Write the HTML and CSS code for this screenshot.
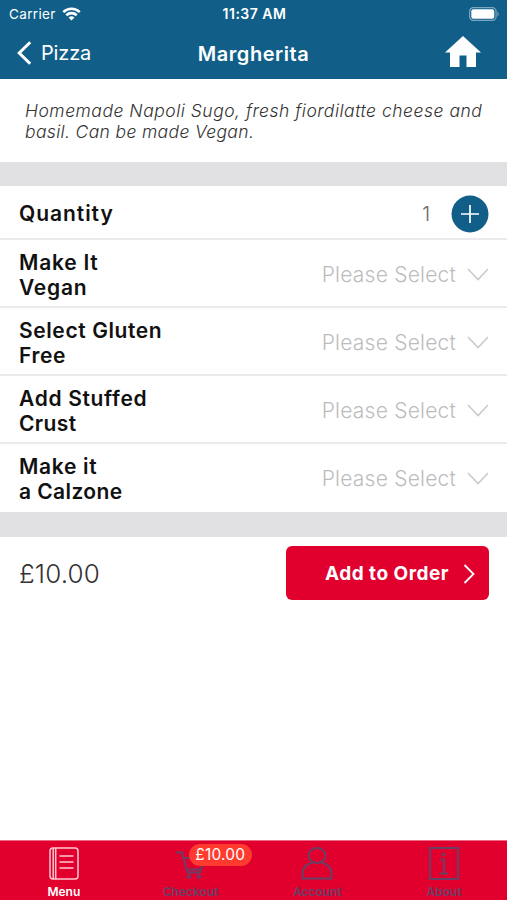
FILE: index.html
```html
<!DOCTYPE html>
<html lang="en">
<head>
<meta charset="utf-8">
<title>Margherita</title>
<link rel="stylesheet" href="styles.css">
</head>
<body>
<div class="app">
  <header class="top">
    <div class="status">
      <div class="carrier"><span>Carrier</span>
        <svg width="19" height="14" viewBox="0 0 19 14" fill="none" stroke="#fff" stroke-width="2.6"><path d="M1.3 5.1C6 .6 13 .6 17.700 5.100M4.300 8.200C7.200 5.400 11.800 5.400 14.700 8.200"/><path d="M9.500 13.500L6.600 10.500Q9.500 8 12.400 10.500Z" fill="#fff" stroke="none"/></svg>
      </div>
      <time>11:37 AM</time>
      <svg class="battery" width="31" height="14" viewBox="0 0 31 14"><rect x=".6" y=".6" width="26.500" height="12.800" rx="3.800" fill="none" stroke="#7ba8c0" stroke-width="1.200"/><rect x="2.300" y="2.300" width="23" height="9.400" rx="2" fill="#fff"/><path d="M28.500 4.500Q31 7 28.500 9.500Z" fill="#7ba8c0"/></svg>
    </div>
    <nav class="nav">
      <a class="back"><svg width="15" height="24" viewBox="0 0 15 24" fill="none" stroke="#fff" stroke-width="3"><path d="M13.200 1.200L2.200 12L13.200 22.800"/></svg><span>Pizza</span></a>
      <h1><span>Margherita</span></h1>
      <svg class="home" width="36" height="31" viewBox="0 0 36 31" fill="#fff"><path d="M18 0L36 16.500H31V31H21.500V19.500H14.500V31H5V16.500H0Z"/></svg>
    </nav>
  </header>
  <p class="description"><span class="d1">Homemade Napoli Sugo, fresh fiordilatte cheese and</span><br><span class="d2">basil. Can be made Vegan.</span></p>
  <section class="options">
    <div class="row quantity"><b class="l1">Quantity</b><div class="count"><span>1</span><svg width="38" height="38" viewBox="0 0 38 38"><circle cx="19" cy="19" r="18.500" fill="#115f89"/><path d="M10 19H28M19 10V28" stroke="#fff" stroke-width="1.700"/></svg></div></div>
    <div class="row"><b><span class="l2">Make It</span><br><span class="l3">Vegan</span></b><div class="select"><span>Please Select</span><svg width="22" height="13" viewBox="0 0 22 13"><path d="M1 1L11 11.500L21 1"/></svg></div></div>
    <div class="row"><b><span class="l4">Select Gluten</span><br><span class="l5">Free</span></b><div class="select"><span>Please Select</span><svg width="22" height="13" viewBox="0 0 22 13"><path d="M1 1L11 11.500L21 1"/></svg></div></div>
    <div class="row"><b><span class="l6">Add Stuffed</span><br><span class="l7">Crust</span></b><div class="select"><span>Please Select</span><svg width="22" height="13" viewBox="0 0 22 13"><path d="M1 1L11 11.500L21 1"/></svg></div></div>
    <div class="row"><b><span class="l8">Make it</span><br><span class="l9">a Calzone</span></b><div class="select"><span>Please Select</span><svg width="22" height="13" viewBox="0 0 22 13"><path d="M1 1L11 11.500L21 1"/></svg></div></div>
  </section>
  <section class="order">
    <span class="price">£10.00</span>
    <button><span>Add to Order</span><svg width="12" height="20" viewBox="0 0 12 20" fill="none" stroke="#fff" stroke-width="1.800"><path d="M1.500 1L10.500 10L1.500 19"/></svg></button>
  </section>
  <footer class="tabs">
    <a class="tab active"><svg width="30" height="33" viewBox="0 0 30 33"><rect x="1" y="1" width="28" height="31" rx="3"/><path d="M4.200 1V32M6.700 1V32M10.500 9H24.500M10.500 15H24.500M10.500 21H24.500"/></svg><span>Menu</span></a>
    <a class="tab checkout"><svg width="30" height="33" viewBox="0 0 30 33"><path d="M0 5.500H6L11.500 25.500H24L28.500 11H7.500M10.500 22.500H25"/><circle cx="13" cy="29.500" r="1.200"/><circle cx="23" cy="29.500" r="1.200"/></svg><span>Checkout</span><i class="badge">£10.00</i></a>
    <a class="tab account"><svg width="32" height="33" viewBox="0 0 32 33"><ellipse cx="16" cy="8.500" rx="8.500" ry="7.500"/><path d="M12 15.200C5 17 1.500 21.500 1.500 27V31.500H30.500V27C30.500 21.500 27 17 20 15.200"/></svg><span>Account</span></a>
    <a class="tab about"><svg width="30" height="33" viewBox="0 0 30 33"><rect x="1" y="1" width="28" height="31"/><path d="M11.500 12.500H15V26M11 26.500H18.500"/><circle cx="14.500" cy="7.500" r=".8"/></svg><span>About</span></a>
  </footer>
</div>
</body>
</html>
```
FILE: styles.css
```css
* { box-sizing: border-box; }
body { margin: 0; background: #fff; font-family: Inter, "Liberation Sans", sans-serif; color: #111; }
svg { display: block; flex: none; }
span, time, b { white-space: nowrap; }
.app { width: 507px; height: 900px; display: flex; flex-direction: column; overflow: hidden; }
.top { height: 79px; background: #115f89; color: #fff; flex: none; }
.status { height: 27px; display: grid; grid-template-columns: 1fr auto 1fr; align-items: center; padding: 0 7px 0 9px; font-size: 13.5px; }
.carrier { display: flex; align-items: center; gap: 6px; letter-spacing: .35px; }
.status time { font-size: 14px; font-weight: 600; letter-spacing: .5px; }
.battery { justify-self: end; }
.nav { height: 52px; display: grid; grid-template-columns: 1fr auto 1fr; align-items: center; padding: 0 26px 1px 17px; }
.back { display: flex; align-items: center; gap: 9px; font-size: 20px; letter-spacing: -.15px; }
.nav h1 { margin: 2px 0 0 9px; font-size: 20px; font-weight: 600; letter-spacing: .55px; }
.home { justify-self: end; margin-top: -2px; }
.description { margin: 0; height: 83px; padding: 21px 25px 0; font-size: 17.5px; line-height: 21px; font-style: italic; font-weight: 300; color: #333; flex: none; }
.d1 { letter-spacing: .51px; }
.d2 { letter-spacing: .35px; }
.options { border: solid #e1e1e4; border-width: 24px 0 25px; flex: none; }
.row { height: 68px; border-bottom: 2px solid #ebebed; display: flex; justify-content: space-between; align-items: center; padding: 3px 18px 0 19px; }
.row:last-child { border: 0; height: 68px; padding-bottom: 2px; }
.quantity { height: 54px; padding-top: 3px; }
.row b { font-size: 21px; line-height: 25px; font-weight: 600; }
.l1 { letter-spacing: .95px; }
.l2, .l3 { letter-spacing: .77px; }
.l4 { letter-spacing: .6px; }
.l5 { letter-spacing: .6px; }
.l6, .l8 { letter-spacing: .67px; }
.l7, .l9 { letter-spacing: .4px; }
.count { display: flex; align-items: center; gap: 21px; font-size: 20px; font-weight: 300; color: #666; }
.select { display: flex; align-items: center; gap: 11px; font-size: 21px; font-weight: 300; color: #bbbcc0; letter-spacing: .22px; }
.select path { fill: none; stroke: #c9cacd; stroke-width: 1.6; }
.order { height: 303px; display: flex; justify-content: space-between; align-items: flex-start; padding: 9px 18px 0 19px; flex: none; }
.price { font-size: 26px; line-height: 56px; font-weight: 300; color: #333; letter-spacing: .1px; }
.order button { width: 203px; height: 54px; border: 0; border-radius: 6px; background: #e1002d; color: #fff; padding: 1px 14px 0 0; display: flex; align-items: center; justify-content: flex-end; gap: 14px; font: 700 19px Inter, sans-serif; letter-spacing: .5px; }
.tabs { height: 60px; background: #e1002d; border-top: 1px solid #ec6a83; display: grid; grid-template-columns: repeat(4, 1fr); flex: none; }
.tab { position: relative; display: flex; flex-direction: column; align-items: center; padding: 6px 0 0 1px; color: #674068; font-size: 12px; font-weight: 600; line-height: 13px; gap: 5px; letter-spacing: 0; }
.tab svg { fill: none; stroke: #674068; stroke-width: 2; }
.tab.active { color: #fff; }
.active svg { stroke: #ffc6cf; stroke-width: 1.5; }
.badge { position: absolute; left: 62px; top: 3px; width: 63px; height: 22px; border-radius: 11px; background: #ff3b30; color: #fff; font-style: normal; font-weight: 400; font-size: 15.5px; line-height: 22px; letter-spacing: .2px; text-align: center; }
```
